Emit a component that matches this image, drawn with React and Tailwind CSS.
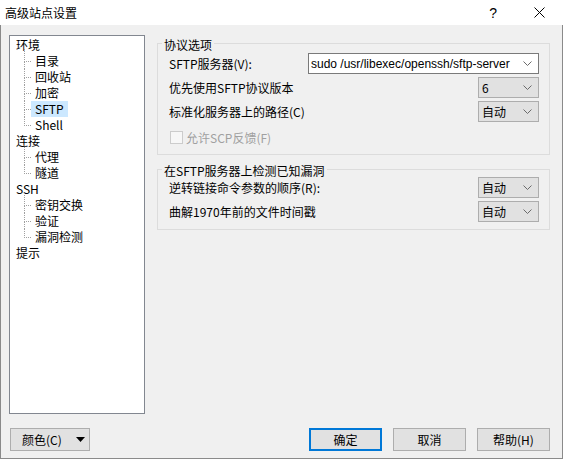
import React from "react";

const Chevron = () => (
  <svg width="9" height="5" viewBox="0 0 9 5" className="shrink-0">
    <path d="M0.5 0.5 L4.5 4.5 L8.5 0.5" fill="none" stroke="#6a6a6a" strokeWidth="1" />
  </svg>
);

const Select = ({ value }) => (
  <div className="flex h-[21px] w-[61px] items-center justify-between border border-[#adadad] bg-[#e1e1e1] pl-[3px] pr-[6px] leading-[19px]">
    <span>{value}</span>
    <Chevron />
  </div>
);

const Row = ({ label, children }) => (
  <div className="flex h-[21px] items-center justify-between pl-[7px]">
    <span className="leading-[16px]">{label}</span>
    {children}
  </div>
);

const TreeTop = ({ label }) => (
  <div className="flex h-[16px] items-center pl-[6px] leading-[16px]">{label}</div>
);

const TreeChild = ({ label, last, selected, first }) => (
  <div className="flex h-[16px]">
    <div className="ml-[14px] flex w-[7px] flex-col">
      <div
        className={
          "border-b border-l border-dotted border-[#a0a0a0] " +
          (first ? "-mt-[4px] h-[13px]" : "h-[9px]")
        }
      />
      <div className={last ? "flex-1" : "flex-1 border-l border-dotted border-[#a0a0a0]"} />
    </div>
    <span className={"h-[16px] px-[4px] leading-[16px] " + (selected ? "bg-[#cce8ff]" : "")}>{label}</span>
  </div>
);

const Button = ({ children, primary, className = "" }) => (
  <div
    className={
      "flex h-[23px] items-center justify-center bg-[#e1e1e1] leading-[16px] " +
      (primary ? "border-2 border-[#0078d7] " : "border border-[#adadad] ") +
      className
    }
  >
    {children}
  </div>
);

export default function App() {
  return (
    <div className="h-[459px] w-[563px] overflow-hidden whitespace-nowrap bg-[#f0f0f0] font-['Noto_Sans_CJK_SC',sans-serif] text-[12px] text-black">
      {/* Title bar */}
      <div className="flex h-[25px] items-center bg-white pl-[5px]">
        <span className="leading-[16px]">高级站点设置</span>
        <div className="ml-auto flex items-center">
          <span className="mr-[37px] font-['Liberation_Sans',sans-serif] text-[14px] leading-[16px]">?</span>
          <svg width="11" height="11" viewBox="0 0 11 11" className="mr-[18px]">
            <path d="M0.5 0.5 L10.5 10.5 M10.5 0.5 L0.5 10.5" stroke="#000" strokeWidth="1" />
          </svg>
        </div>
      </div>

      {/* Body */}
      <div className="flex h-[434px] flex-col border-x border-b border-[#8a8a8a] pl-[8px] pr-[12px] pt-[10px]">
        <div className="flex h-[379px] gap-[12px]">
          {/* Tree */}
          <div className="w-[136px] border border-[#828790] bg-white pt-[1px]">
            <TreeTop label="环境" />
            <TreeChild label="目录" first />
            <TreeChild label="回收站" />
            <TreeChild label="加密" />
            <TreeChild label="SFTP" selected />
            <TreeChild label="Shell" last />
            <TreeTop label="连接" />
            <TreeChild label="代理" first />
            <TreeChild label="隧道" last />
            <TreeTop label="SSH" />
            <TreeChild label="密钥交换" first />
            <TreeChild label="验证" />
            <TreeChild label="漏洞检测" last />
            <TreeTop label="提示" />
          </div>

          {/* Right column */}
          <div className="flex w-[393px] flex-col gap-[6px]">
            <fieldset className="border border-[#dcdcdc] pb-[6px] pl-[4px] pr-[10px]">
              <legend className="px-[2px] pt-[4px] leading-[12px]">协议选项</legend>
              <div className="flex flex-col gap-[3px] pt-[2px]">
                <Row label="SFTP服务器(V):">
                  <div className="flex h-[21px] w-[231px] items-center justify-between border border-[#7a7a7a] bg-white pl-[2px] pr-[6px]">
                    <span className="font-['Liberation_Sans',sans-serif] leading-[16px]">sudo /usr/libexec/openssh/sftp-server</span>
                    <Chevron />
                  </div>
                </Row>
                <Row label="优先使用SFTP协议版本">
                  <Select value="6" />
                </Row>
                <Row label="标准化服务器上的路径(C)">
                  <Select value="自动" />
                </Row>
                <div className="mt-[2px] flex h-[21px] items-center pl-[8px] text-[#a0a0a0]">
                  <div className="h-[13px] w-[13px] border border-[#cccccc] bg-[#f7f7f7]" />
                  <span className="ml-[3px] leading-[16px]">允许SCP反馈(F)</span>
                </div>
              </div>
            </fieldset>

            <fieldset className="border border-[#dcdcdc] pb-[7px] pl-[4px] pr-[10px]">
              <legend className="px-[2px] pt-[4px] leading-[12px]">在SFTP服务器上检测已知漏洞</legend>
              <div className="flex flex-col gap-[3px]">
                <Row label="逆转链接命令参数的顺序(R):">
                  <Select value="自动" />
                </Row>
                <Row label="曲解1970年前的文件时间戳">
                  <Select value="自动" />
                </Row>
              </div>
            </fieldset>
          </div>
        </div>

        {/* Buttons */}
        <div className="mt-[14px] flex items-center">
          <Button className="ml-[1px] w-[80px] justify-start pl-[11px]">
            <span>颜色(C)</span>
            <svg width="9" height="5" viewBox="0 0 9 5" className="ml-[14px]">
              <path d="M0 0 L9 0 L4.5 5 Z" fill="#000" />
            </svg>
          </Button>
          <div className="ml-auto flex gap-[11px]">
            <Button primary className="w-[73px]">确定</Button>
            <Button className="w-[73px]">取消</Button>
            <Button className="w-[73px]">帮助(H)</Button>
          </div>
        </div>
      </div>
    </div>
  );
}
